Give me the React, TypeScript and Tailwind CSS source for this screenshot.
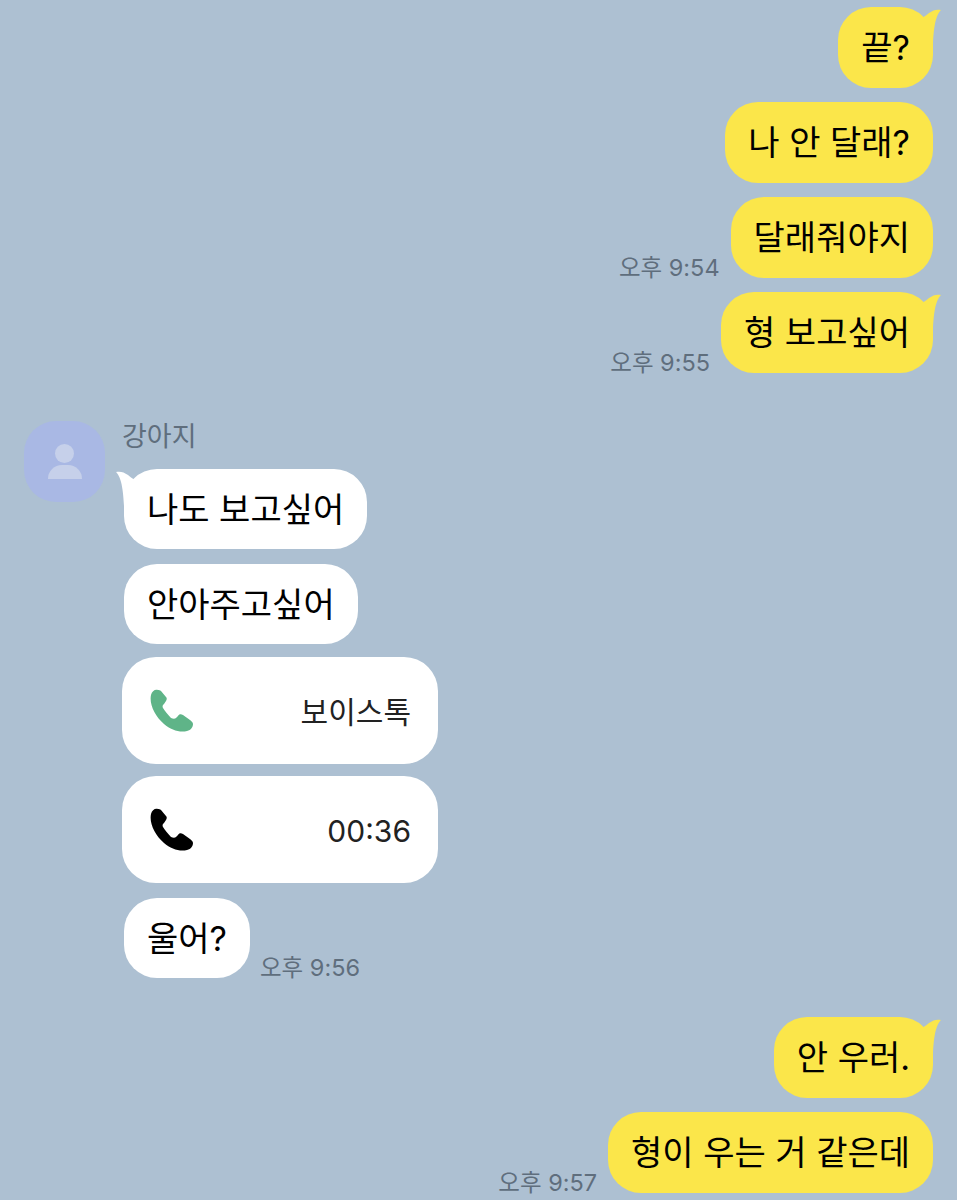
const KR = "font-['Inter','Noto_Sans_CJK_KR','Noto_Sans',sans-serif]";

function Tail({ side }: { side: 'left' | 'right' }) {
  if (side === 'right') {
    return (
      <svg className="absolute right-[-8px] top-[1px]" width="26" height="36" viewBox="0 0 26 36">
        <path d="M0 13 C6 12 10 8 14 5 C18 2 22 1 26 2 C22 6 19 14 18 36 L0 36 Z" fill="#fbe64a" />
      </svg>
    );
  }
  return (
    <svg className="absolute left-[-8px] top-[1px]" width="26" height="36" viewBox="0 0 26 36">
      <path d="M26 13 C20 12 16 8 12 5 C8 2 4 1 0 2 C4 6 7 14 8 36 L26 36 Z" fill="#ffffff" />
    </svg>
  );
}

function Time({ children }: { children: string }) {
  return <span className="mb-[-3px] text-[23.5px] leading-[26px] text-[#5f6e7d] whitespace-nowrap">{children}</span>;
}

function Bubble({ text, me, tail, h = 'h-[81px]' }: { text: string; me?: boolean; tail?: boolean; h?: string }) {
  return (
    <div
      className={`relative flex ${h} items-center rounded-[33px] px-[23px] pt-[1px] text-[34px] leading-none text-black whitespace-nowrap ${
        me ? 'bg-[#fbe64a]' : 'bg-white'
      }`}
    >
      {tail && <Tail side={me ? 'right' : 'left'} />}
      <span className="relative">{text}</span>
    </div>
  );
}

function MyRow({ text, time, tail, className = '' }: { text: string; time?: string; tail?: boolean; className?: string }) {
  return (
    <div className={`flex items-end justify-end gap-[11px] pr-[24px] ${className}`}>
      {time && <Time>{time}</Time>}
      <Bubble text={text} me tail={tail} />
    </div>
  );
}

function PhoneIcon({ color }: { color: string }) {
  return (
    <svg width="44" height="44" viewBox="0 0 44 44" fill={color}>
      <path d="M8 1 C5 0 2 2 1 6 C-1 15 5 27 14 35 C21 41 30 44 37 42 C41 41 43 38 43 35 C43 33 41 32 40 31 L33 26 C31 25 29 25 28 27 L26 29 C25 30 23 30 21 29 C18 26 15 22 13 19 C12 17 13 16 14 15 L16 12 C17 10 17 9 16 8 L11 2 C10 1 9 1 8 1 Z" />
    </svg>
  );
}

function CallCard({ color, label, className = '' }: { color: string; label: string; className?: string }) {
  return (
    <div className={`flex h-[107px] w-[316px] items-center justify-between rounded-[34px] bg-white pl-[28px] pr-[27px] ${className}`}>
      <PhoneIcon color={color} />
      <span className="pt-[3px] text-[30px] leading-none text-[#222]">{label}</span>
    </div>
  );
}

export default function App() {
  return (
    <div className={`h-[1200px] w-full overflow-hidden bg-[#adc0d2] pt-[7px] ${KR}`}>
      <div className="flex flex-col gap-[14px]">
        <MyRow text="끝?" tail />
        <MyRow text="나 안 달래?" />
        <MyRow text="달래줘야지" time="오후 9:54" />
        <MyRow text="형 보고싶어" time="오후 9:55" tail />
      </div>

      <div className="mt-[48px] flex pl-[24px]">
        <div className="flex h-[81px] w-[81px] shrink-0 flex-col items-center justify-center rounded-[32px] bg-[#a9b8e4]">
          <div className="h-[19px] w-[19px] rounded-full bg-[#c6d0ea]" />
          <div className="mt-[2px] h-[14px] w-[34px] rounded-t-[17px] bg-[#c6d0ea]" />
        </div>
        <div className="ml-[17px] flex flex-col items-start">
          <span className="h-[48px] pt-[2px] text-[27px] leading-[28px] text-[#5f6e7d]">강아지</span>
          <div className="ml-[2px]">
            <Bubble text="나도 보고싶어" tail h="h-[80px]" />
          </div>
          <div className="ml-[2px] mt-[15px]">
            <Bubble text="안아주고싶어" h="h-[80px]" />
          </div>
          <CallCard color="#5fb488" label="보이스톡" className="mt-[13px]" />
          <CallCard color="#000000" label="00:36" className="mt-[12px]" />
          <div className="ml-[2px] mt-[15px] flex items-end gap-[10px]">
            <Bubble text="울어?" h="h-[80px]" />
            <Time>오후 9:56</Time>
          </div>
        </div>
      </div>

      <div className="mt-[39px] flex flex-col gap-[14px]">
        <MyRow text="안 우러." tail />
        <MyRow text="형이 우는 거 같은데" time="오후 9:57" />
      </div>
    </div>
  );
}
